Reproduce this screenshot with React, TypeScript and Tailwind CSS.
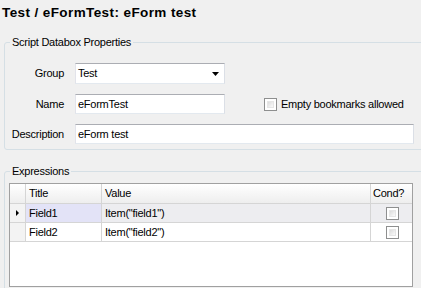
const rows = [
    { title: "Field1", value: 'Item("field1")', current: true },
    { title: "Field2", value: 'Item("field2")', current: false },
];

function CheckBox() {
    return (
        <div className="w-[13px] h-[13px] border border-[#8e8f8f] bg-white p-[2px]">
            <div className="w-full h-full bg-gradient-to-br from-[#dcdcdc] to-[#fbfbfb] border border-[#e6e6e6]" />
        </div>
    );
}

function App() {
    const inputBox = "h-[20px] bg-white border border-[#e3e9ef] border-t-[#abadb3] border-l-[#e2e3ea] border-r-[#dbdfe6] pl-[2px] flex items-center";

    return (
        <div className="w-[421px] h-[288px] overflow-hidden bg-[#f0f0f0] font-['Liberation_Sans',Arial,sans-serif] text-[11px] tracking-[-0.25px] text-black">
            <div className="h-[36px] pl-[2px] pt-[5px] leading-[16px] text-[13.5px] font-bold tracking-[0.4px]">
                Test / eFormTest: eForm test
            </div>

            <fieldset className="ml-[4px] w-[430px] border border-[#d5dfe5] rounded-[3px] pt-[15px] pb-[5px]">
                <legend className="ml-[5px] px-[2px] leading-[12px]">Script Databox Properties</legend>
                <div className="grid grid-cols-[60px_150px_1fr] gap-x-[10px] gap-y-[10px] items-center">
                    <div className="text-right pr-[1px]">Group</div>
                    <div className={inputBox + " h-[21px] justify-between pr-[5px]"}>
                        <span>Test</span>
                        <svg width="7" height="4" viewBox="0 0 7 4">
                            <polygon points="0,0 7,0 3.5,4" fill="#000" />
                        </svg>
                    </div>
                    <div />

                    <div className="text-right pr-[1px]">Name</div>
                    <div className={inputBox}>eFormTest</div>
                    <div className="flex items-center pl-[29px]">
                        <CheckBox />
                        <span className="ml-[4px]">Empty bookmarks allowed</span>
                    </div>

                    <div className="text-right pr-[1px]">Description</div>
                    <div className={inputBox + " col-span-2 w-[339px]"}>eForm test</div>
                </div>
            </fieldset>

            <fieldset className="mt-[15px] ml-[4px] w-[430px] h-[140px] border border-[#d5dfe5] rounded-[3px] pt-[6px]">
                <legend className="ml-[5px] px-[2px] leading-[12px]">Expressions</legend>
                <div className="ml-[4px] w-[404px] h-[104px] border border-[#a0a0a0] bg-white flex flex-col">
                    <div className="flex h-[20px] border-b border-[#d5d5d5] bg-gradient-to-b from-[#ffffff] to-[#eeeeee] leading-[19px]">
                        <div className="w-[16px] border-r border-[#d5d5d5]" />
                        <div className="w-[76px] border-r border-[#d5d5d5] pl-[3px]">Title</div>
                        <div className="w-[269px] border-r border-[#d5d5d5] pl-[3px]">Value</div>
                        <div className="flex-1 pl-[2px]">Cond?</div>
                    </div>
                    {rows.map((row) => (
                        <div key={row.title} className={"flex h-[19px] border-b border-[#d5d5d5] leading-[18px] " + (row.current ? "bg-[#ededf0]" : "bg-white")}>
                            <div className="w-[16px] border-r border-[#d5d5d5] bg-[#f3f3f3] flex items-center pl-[6px]">
                                {row.current && (
                                    <svg width="3" height="6" viewBox="0 0 3 6">
                                        <polygon points="0,0 3,3 0,6" fill="#000" />
                                    </svg>
                                )}
                            </div>
                            <div className={"w-[76px] border-r border-[#d5d5d5] pl-[3px] " + (row.current ? "bg-[#e3e3f7]" : "")}>{row.title}</div>
                            <div className="w-[269px] border-r border-[#d5d5d5] pl-[3px]">{row.value}</div>
                            <div className="flex-1 flex items-center justify-center pl-[1px]">
                                <CheckBox />
                            </div>
                        </div>
                    ))}
                </div>
            </fieldset>
        </div>
    );
}

export default App;
